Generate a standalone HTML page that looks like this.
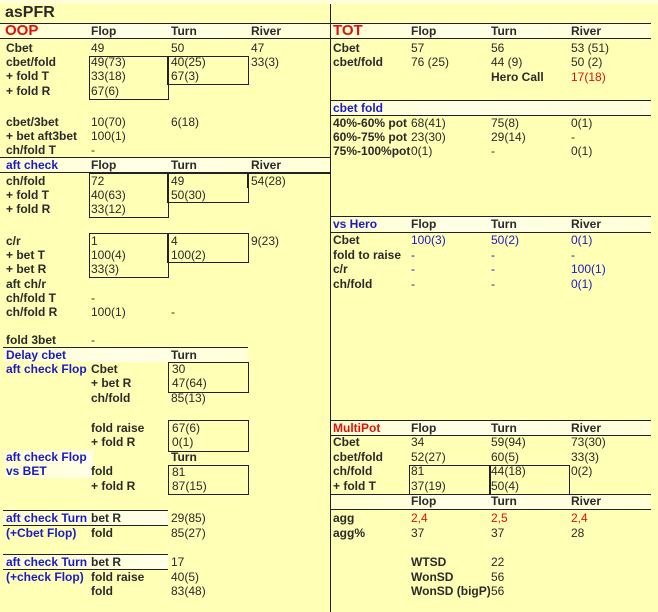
<!DOCTYPE html>
<html><head><meta charset="utf-8"><style>
body{margin:0;width:658px;height:612px;background:#FFFFB5;position:relative;overflow:hidden;font-family:"Liberation Sans",Arial,sans-serif;color:#2a2a2a}
div{position:absolute}
.t{font-size:12px;line-height:14px;white-space:nowrap}
.b{font-weight:bold}
.bl{color:#1a1ac8;font-weight:bold}
.v{color:#1a1ac8}
.r{color:#e01010}
.band{background:linear-gradient(90deg,#FFFFD0,#FFFFE8 40%,#FFFFD8);border-top:1px solid #222;border-bottom:1px solid #222}
.ln{border-top:1px solid #222;height:0}
.box{border:1px solid #222}
</style></head><body>
<div style="left:0;top:0;width:658px;height:4px;background:#FFFFD8"></div>
<div style="left:330px;top:4px;width:1px;height:608px;background:#222"></div>
<div class="t b" style="left:5px;top:4px;font-size:16px;line-height:18px">asPFR</div>

<!-- left OOP -->
<div class="band" style="left:0;top:23px;width:330px;height:14px"></div>
<div class="t b r" style="left:5px;top:23px;font-size:15px;line-height:16px">OOP</div>
<div class="t b" style="left:91px;top:24px">Flop</div><div class="t b" style="left:171px;top:24px">Turn</div><div class="t b" style="left:251px;top:24px">River</div>
<div class="box" style="left:89px;top:56px;width:78px;height:42px"></div>
<div class="box" style="left:167px;top:56px;width:80px;height:27px"></div>
<div class="t b" style="left:6px;top:41px">Cbet</div><div class="t" style="left:91px;top:41px">49</div><div class="t" style="left:171px;top:41px">50</div><div class="t" style="left:251px;top:41px">47</div>
<div class="t b" style="left:6px;top:55px">cbet/fold</div><div class="t" style="left:91px;top:55px">49(73)</div><div class="t" style="left:171px;top:55px">40(25)</div><div class="t" style="left:251px;top:55px">33(3)</div>
<div class="t b" style="left:6px;top:69px">+ fold T</div><div class="t" style="left:91px;top:69px">33(18)</div><div class="t" style="left:171px;top:69px">67(3)</div>
<div class="t b" style="left:6px;top:84px">+ fold R</div><div class="t" style="left:91px;top:84px">67(6)</div>
<div class="t b" style="left:6px;top:115px">cbet/3bet</div><div class="t" style="left:91px;top:115px">10(70)</div><div class="t" style="left:171px;top:115px">6(18)</div>
<div class="t b" style="left:6px;top:129px">+ bet aft3bet</div><div class="t" style="left:91px;top:129px">100(1)</div>
<div class="t b" style="left:6px;top:143px">ch/fold T</div><div class="t" style="left:91px;top:143px">-</div>

<div class="band" style="left:0;top:157px;width:330px;height:14px"></div>
<div class="t bl" style="left:6px;top:158px">aft check</div><div class="t b" style="left:91px;top:158px">Flop</div><div class="t b" style="left:171px;top:158px">Turn</div><div class="t b" style="left:251px;top:158px">River</div>
<div class="box" style="left:89px;top:173px;width:78px;height:43px"></div>
<div class="box" style="left:167px;top:173px;width:80px;height:28px"></div>
<div class="box" style="left:247px;top:173px;width:83px;height:14px;border-bottom:none;border-right:none"></div>
<div class="t b" style="left:6px;top:174px">ch/fold</div><div class="t" style="left:91px;top:174px">72</div><div class="t" style="left:171px;top:174px">49</div><div class="t" style="left:251px;top:174px">54(28)</div>
<div class="t b" style="left:6px;top:188px">+ fold T</div><div class="t" style="left:91px;top:188px">40(63)</div><div class="t" style="left:171px;top:188px">50(30)</div>
<div class="t b" style="left:6px;top:202px">+ fold R</div><div class="t" style="left:91px;top:202px">33(12)</div>

<div class="box" style="left:89px;top:233px;width:78px;height:43px"></div>
<div class="box" style="left:167px;top:233px;width:80px;height:28px"></div>
<div class="t b" style="left:6px;top:234px">c/r</div><div class="t" style="left:91px;top:234px">1</div><div class="t" style="left:171px;top:234px">4</div><div class="t" style="left:251px;top:234px">9(23)</div>
<div class="t b" style="left:6px;top:248px">+ bet T</div><div class="t" style="left:91px;top:248px">100(4)</div><div class="t" style="left:171px;top:248px">100(2)</div>
<div class="t b" style="left:6px;top:262px">+ bet R</div><div class="t" style="left:91px;top:262px">33(3)</div>
<div class="t b" style="left:6px;top:277px">aft ch/r</div>
<div class="t b" style="left:6px;top:291px">ch/fold T</div><div class="t" style="left:91px;top:291px">-</div>
<div class="t b" style="left:6px;top:305px">ch/fold R</div><div class="t" style="left:91px;top:305px">100(1)</div><div class="t" style="left:171px;top:305px">-</div>
<div class="t b" style="left:6px;top:333px">fold 3bet</div><div class="t" style="left:91px;top:333px">-</div>
<div class="ln" style="left:3px;top:347px;width:245px"></div>

<div style="left:3px;top:348px;width:245px;height:14px;background:linear-gradient(90deg,#FFFFD0,#FFFFE8 50%,#FFFFD8)"></div>
<div class="t bl" style="left:6px;top:348px">Delay cbet</div><div class="t b" style="left:171px;top:348px">Turn</div>
<div class="t bl" style="left:6px;top:362px">aft check Flop</div>
<div class="box" style="left:168px;top:362px;width:79px;height:29px"></div>
<div class="box" style="left:168px;top:420px;width:79px;height:30px"></div>
<div class="box" style="left:168px;top:465px;width:79px;height:28px"></div>
<div class="t b" style="left:91px;top:362px">Cbet</div><div class="t" style="left:172px;top:362px">30</div>
<div class="t b" style="left:91px;top:376px">+ bet R</div><div class="t" style="left:172px;top:376px">47(64)</div>
<div class="t b" style="left:91px;top:391px">ch/fold</div><div class="t" style="left:171px;top:391px">85(13)</div>
<div class="t b" style="left:91px;top:421px">fold raise</div><div class="t" style="left:172px;top:421px">67(6)</div>
<div class="t b" style="left:91px;top:435px">+ fold R</div><div class="t" style="left:172px;top:435px">0(1)</div>
<div style="left:3px;top:450px;width:90px;height:28px;background:linear-gradient(90deg,#FFFFD0,#FFFFE8)"></div>
<div class="t bl" style="left:6px;top:450px">aft check Flop</div><div class="t b" style="left:171px;top:450px">Turn</div>
<div class="t bl" style="left:6px;top:464px">vs BET</div><div class="t b" style="left:91px;top:464px">fold</div><div class="t" style="left:172px;top:465px">81</div>
<div class="t b" style="left:91px;top:479px">+ fold R</div><div class="t" style="left:172px;top:479px">87(15)</div>

<div class="ln" style="left:3px;top:510px;width:165px"></div>
<div style="left:3px;top:511px;width:165px;height:14px;background:linear-gradient(90deg,#FFFFD0,#FFFFE8)"></div>
<div class="ln" style="left:3px;top:525px;width:165px"></div>
<div class="t bl" style="left:6px;top:511px">aft check Turn</div><div class="t b" style="left:91px;top:511px">bet R</div><div class="t" style="left:171px;top:511px">29(85)</div>
<div class="t bl" style="left:6px;top:526px">(+Cbet Flop)</div><div class="t b" style="left:91px;top:526px">fold</div><div class="t" style="left:171px;top:526px">85(27)</div>
<div class="ln" style="left:3px;top:554px;width:165px"></div>
<div style="left:3px;top:555px;width:165px;height:14px;background:linear-gradient(90deg,#FFFFD0,#FFFFE8)"></div>
<div class="ln" style="left:3px;top:569px;width:165px"></div>
<div class="t bl" style="left:6px;top:555px">aft check Turn</div><div class="t b" style="left:91px;top:555px">bet R</div><div class="t" style="left:171px;top:555px">17</div>
<div class="t bl" style="left:6px;top:570px">(+check Flop)</div><div class="t b" style="left:91px;top:570px">fold raise</div><div class="t" style="left:171px;top:570px">40(5)</div>
<div class="t b" style="left:91px;top:584px">fold</div><div class="t" style="left:171px;top:584px">83(48)</div>

<!-- right -->
<div class="band" style="left:331px;top:23px;width:320px;height:14px"></div>
<div class="t b r" style="left:333px;top:23px;font-size:15px;line-height:16px">TOT</div>
<div class="t b" style="left:411px;top:24px">Flop</div><div class="t b" style="left:491px;top:24px">Turn</div><div class="t b" style="left:571px;top:24px">River</div>
<div class="t b" style="left:333px;top:41px">Cbet</div><div class="t" style="left:411px;top:41px">57</div><div class="t" style="left:491px;top:41px">56</div><div class="t" style="left:571px;top:41px">53 (51)</div>
<div class="t b" style="left:333px;top:55px">cbet/fold</div><div class="t" style="left:411px;top:55px">76 (25)</div><div class="t" style="left:491px;top:55px">44 (9)</div><div class="t" style="left:571px;top:55px">50 (2)</div>
<div class="t b" style="left:491px;top:70px">Hero Call</div><div class="t r" style="left:571px;top:70px">17(18)</div>

<div class="band" style="left:331px;top:100px;width:320px;height:14px"></div>
<div class="t bl" style="left:333px;top:101px">cbet fold</div>
<div class="t b" style="left:333px;top:116px">40%-60% pot</div><div class="t" style="left:411px;top:116px">68(41)</div><div class="t" style="left:491px;top:116px">75(8)</div><div class="t" style="left:571px;top:116px">0(1)</div>
<div class="t b" style="left:333px;top:130px">60%-75% pot</div><div class="t" style="left:411px;top:130px">23(30)</div><div class="t" style="left:491px;top:130px">29(14)</div><div class="t" style="left:571px;top:130px">-</div>
<div class="t b" style="left:333px;top:144px">75%-100%pot</div><div class="t" style="left:411px;top:144px">0(1)</div><div class="t" style="left:491px;top:144px">-</div><div class="t" style="left:571px;top:144px">0(1)</div>

<div class="band" style="left:331px;top:216px;width:320px;height:15px"></div>
<div class="t bl" style="left:333px;top:217px">vs Hero</div><div class="t b" style="left:411px;top:217px">Flop</div><div class="t b" style="left:491px;top:217px">Turn</div><div class="t b" style="left:571px;top:217px">River</div>
<div class="t b" style="left:333px;top:233px">Cbet</div><div class="t v" style="left:411px;top:233px">100(3)</div><div class="t v" style="left:491px;top:233px">50(2)</div><div class="t v" style="left:571px;top:233px">0(1)</div>
<div class="t b" style="left:333px;top:248px">fold to raise</div><div class="t v" style="left:411px;top:248px">-</div><div class="t v" style="left:491px;top:248px">-</div><div class="t v" style="left:571px;top:248px">-</div>
<div class="t b" style="left:333px;top:262px">c/r</div><div class="t v" style="left:411px;top:262px">-</div><div class="t v" style="left:491px;top:262px">-</div><div class="t v" style="left:571px;top:262px">100(1)</div>
<div class="t b" style="left:333px;top:277px">ch/fold</div><div class="t v" style="left:411px;top:277px">-</div><div class="t v" style="left:491px;top:277px">-</div><div class="t v" style="left:571px;top:277px">0(1)</div>

<div class="band" style="left:331px;top:420px;width:320px;height:14px"></div>
<div class="t b r" style="left:333px;top:421px">MultiPot</div><div class="t b" style="left:411px;top:421px">Flop</div><div class="t b" style="left:491px;top:421px">Turn</div><div class="t b" style="left:571px;top:421px">River</div>
<div class="t b" style="left:333px;top:435px">Cbet</div><div class="t" style="left:411px;top:435px">34</div><div class="t" style="left:491px;top:435px">59(94)</div><div class="t" style="left:571px;top:435px">73(30)</div>
<div class="t b" style="left:333px;top:450px">cbet/fold</div><div class="t" style="left:411px;top:450px">52(27)</div><div class="t" style="left:491px;top:450px">60(5)</div><div class="t" style="left:571px;top:450px">33(3)</div>
<div class="box" style="left:409px;top:465px;width:80px;height:29px;border-bottom:none"></div>
<div class="box" style="left:489px;top:465px;width:79px;height:29px;border-bottom:none"></div>
<div class="t b" style="left:333px;top:464px">ch/fold</div><div class="t" style="left:411px;top:464px">81</div><div class="t" style="left:491px;top:464px">44(18)</div><div class="t" style="left:571px;top:464px">0(2)</div>
<div class="t b" style="left:333px;top:479px">+ fold T</div><div class="t" style="left:411px;top:479px">37(19)</div><div class="t" style="left:491px;top:479px">50(4)</div>
<div class="band" style="left:331px;top:494px;width:320px;height:14px"></div>
<div class="t b" style="left:411px;top:494px">Flop</div><div class="t b" style="left:491px;top:494px">Turn</div><div class="t b" style="left:571px;top:494px">River</div>
<div class="t b" style="left:333px;top:511px">agg</div><div class="t r" style="left:411px;top:511px">2,4</div><div class="t r" style="left:491px;top:511px">2,5</div><div class="t r" style="left:571px;top:511px">2,4</div>
<div class="t b" style="left:333px;top:526px">agg%</div><div class="t" style="left:411px;top:526px">37</div><div class="t" style="left:491px;top:526px">37</div><div class="t" style="left:571px;top:526px">28</div>
<div class="t b" style="left:411px;top:555px">WTSD</div><div class="t" style="left:491px;top:555px">22</div>
<div class="t b" style="left:411px;top:570px">WonSD</div><div class="t" style="left:491px;top:570px">56</div>
<div class="t b" style="left:411px;top:584px">WonSD (bigP)</div><div class="t" style="left:491px;top:584px">56</div>
</body></html>
